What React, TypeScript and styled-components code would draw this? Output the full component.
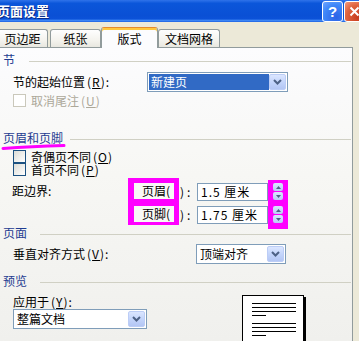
import React from "react";
import styled, { createGlobalStyle } from "styled-components";

const GlobalStyle = createGlobalStyle`
  html, body { margin: 0; padding: 0; }
  body {
    width: 359px;
    height: 341px;
    overflow: hidden;
    background: #ece9d8;
    font-family: "Noto Sans CJK SC", "Noto Sans", sans-serif;
    font-size: 12px;
    color: #000;
  }
`;

const Window = styled.div`
  width: 359px;
  height: 341px;
  overflow: hidden;
  display: flex;
  flex-direction: column;
`;

const TitleBar = styled.div`
  width: 366px;
  height: 22px;
  flex: none;
  display: flex;
  align-items: center;
  background: linear-gradient(#2f73ea 0%, #0b56da 15%, #0a50d5 70%, #0c52d8 86%, #3d86f4 93%, #1d62e2 100%);
`;

const Title = styled.div`
  flex: 1;
  margin-left: -3px;
  color: #fff;
  font-weight: bold;
  font-size: 13px;
  line-height: 14px;
  text-shadow: 1px 1px 0 #0a2a86;
`;

const CaptionButton = styled.div<{ $kind: "help" | "close" }>`
  width: 21px;
  height: 21px;
  flex: none;
  margin-right: 1px;
  box-sizing: border-box;
  border: 1px solid #fff;
  border-radius: 3px;
  display: flex;
  align-items: center;
  justify-content: center;
  color: #fff;
  font: bold 15px "Liberation Sans", sans-serif;
  background: ${(p) =>
    p.$kind === "help"
      ? "radial-gradient(circle at 70% 80%, #2b63e6 0%, #3f86f8 60%, #6ea6ff 100%)"
      : "radial-gradient(circle at 70% 80%, #c63a1c 0%, #e0643f 60%, #f39a7e 100%)"};
`;

const Body = styled.div`
  flex: 1;
  display: flex;
  flex-direction: column;
`;

const TabStrip = styled.div`
  display: flex;
  align-items: flex-end;
  height: 20px;
  margin: 5px 0 0 -3px;
  position: relative;
  z-index: 1;
`;

const Tab = styled.div<{ $w: number; $active?: boolean; $ml?: number }>`
  width: ${(p) => p.$w}px;
  height: ${(p) => (p.$active ? 21 : 18)}px;
  margin-left: ${(p) => p.$ml ?? 0}px;
  margin-bottom: ${(p) => (p.$active ? -1 : 0)}px;
  box-sizing: border-box;
  border: 1px solid #919b9c;
  border-bottom: none;
  border-top-color: ${(p) => (p.$active ? "#e68b2c" : "#919b9c")};
  border-radius: 3px 3px 0 0;
  background: ${(p) => (p.$active ? "#fcfcfe" : "linear-gradient(#fefefe, #f4f3ee 60%, #e8e7e0)")};
  box-shadow: ${(p) => (p.$active ? "inset 0 2px 0 #ffc83c" : "none")};
  display: flex;
  align-items: center;
  justify-content: center;
  padding-top: ${(p) => (p.$active ? 2 : 0)}px;
  line-height: 12px;
  white-space: nowrap;
`;

const Panel = styled.div`
  position: relative;
  flex: 1;
  width: 354px;
  margin-left: -1px;
  box-sizing: border-box;
  border: 1px solid #919b9c;
  background: linear-gradient(#fcfcfe 0%, #f7f7f4 40%, #efefec 100%);
  display: flex;
  flex-direction: column;
`;

const SectionHead = styled.div<{ $mt: number }>`
  display: flex;
  align-items: center;
  height: 12px;
  margin-top: ${(p) => p.$mt}px;
  padding-left: 3px;
  color: #1f3c91;
  line-height: 12px;
  white-space: nowrap;
`;

const Rule = styled.div<{ $gap: number }>`
  flex: 1;
  height: 1px;
  margin: 2px 1px 0 ${(p) => p.$gap}px;
  background: #d0d0c4;
`;

const Row = styled.div<{ $mt: number; $h: number }>`
  display: flex;
  align-items: center;
  height: ${(p) => p.$h}px;
  margin-top: ${(p) => p.$mt}px;
  padding-left: 13px;
`;

const FieldLabel = styled.div<{ $w: number }>`
  width: ${(p) => p.$w}px;
  flex: none;
  line-height: 12px;
  white-space: nowrap;
`;

const Mn = styled.span`
  letter-spacing: 1px;
  margin-left: 2px;
`;

const SelectBox = styled.div<{ $w: number }>`
  width: ${(p) => p.$w}px;
  height: 20px;
  flex: none;
  box-sizing: border-box;
  border: 1px solid #7f9db9;
  background: #fff;
  padding: 1px;
  display: flex;
`;

const SelectValue = styled.div<{ $selected?: boolean }>`
  flex: 1;
  display: flex;
  align-items: center;
  padding-left: 2px;
  line-height: 12px;
  background: ${(p) => (p.$selected ? "#316ac5" : "transparent")};
  color: ${(p) => (p.$selected ? "#fff" : "#000")};
`;

const DropButton = styled.div`
  width: 17px;
  flex: none;
  box-sizing: border-box;
  border: 1px solid #bccdf6;
  border-radius: 2px;
  background: linear-gradient(#dbe6ff, #c4d5fb 50%, #b3c6f4);
  display: flex;
  align-items: center;
  justify-content: center;
`;

const CheckRow = styled.div<{ $mt: number; $disabled?: boolean }>`
  display: flex;
  align-items: center;
  height: 13px;
  margin-top: ${(p) => p.$mt}px;
  padding-left: 13px;
  gap: 5px;
  line-height: 12px;
  color: ${(p) => (p.$disabled ? "#aca899" : "#000")};
`;

const Box = styled.div<{ $disabled?: boolean }>`
  width: 13px;
  height: 13px;
  flex: none;
  box-sizing: border-box;
  border: 1px solid ${(p) => (p.$disabled ? "#cac8bb" : "#1c5180")};
  background: ${(p) => (p.$disabled ? "#fff" : "linear-gradient(135deg, #dcdcd6, #fff)")};
`;

const SpinArea = styled.div`
  display: flex;
  align-items: flex-start;
  height: 47px;
  margin-top: 2px;
  padding-left: 12px;
`;

const MarginLabel = styled.div`
  width: 116px;
  flex: none;
  padding-top: 7px;
  line-height: 12px;
`;

const MarkLabels = styled.div`
  width: 51px;
  height: 47px;
  flex: none;
  box-sizing: border-box;
  padding: 5px 5px 3px 6px;
  background: #ff00ff;
  display: flex;
  flex-direction: column;
  gap: 7px;
`;

const MarkCell = styled.div`
  height: 16px;
  background: #f8f8f6;
  display: flex;
  align-items: center;
  padding-left: 8px;
  overflow: hidden;
  white-space: nowrap;
  line-height: 12px;
`;

const Inputs = styled.div`
  display: flex;
  flex-direction: column;
  gap: 5px;
  padding-top: 5px;
`;

const InputRow = styled.div`
  display: flex;
  align-items: center;
  height: 18px;
`;

const Colon = styled.div`
  width: 17px;
  flex: none;
  padding-left: 1px;
  letter-spacing: 3px;
  line-height: 12px;
`;

const TextField = styled.div`
  width: 71px;
  height: 18px;
  flex: none;
  box-sizing: border-box;
  border: 1px solid #7f9db9;
  background: #fff;
  padding-left: 3px;
  display: flex;
  align-items: center;
  letter-spacing: 1px;
  line-height: 12px;
`;

const SpinCol = styled.div`
  width: 20px;
  height: 49px;
  flex: none;
  margin-top: 2px;
  box-sizing: border-box;
  padding: 3px 5px;
  background: #ff00ff;
  display: flex;
  flex-direction: column;
  gap: 6px;
`;

const Spinner = styled.div`
  height: 17px;
  display: flex;
  flex-direction: column;
  gap: 1px;
`;

const SpinHalf = styled.div`
  flex: 1;
  border-radius: 2px;
  background: linear-gradient(#dbe6ff, #b9cbf6);
  display: flex;
  align-items: center;
  justify-content: center;
`;

const Bottom = styled.div`
  display: flex;
  align-items: flex-start;
  margin-top: 8px;
`;

const ApplyCol = styled.div`
  width: 134px;
  padding-left: 13px;
  flex: none;
  display: flex;
  flex-direction: column;
`;

const ApplyLabel = styled.div`
  height: 14px;
  line-height: 14px;
`;

const PreviewPage = styled.div`
  margin-left: 95px;
  width: 62px;
  height: 70px;
  flex: none;
  box-sizing: border-box;
  border: 1px solid #000;
  background: #fff;
  box-shadow: 2px 2px 0 #000;
`;

const Scribble = styled.svg`
  position: absolute;
  left: 1px;
  top: 95px;
`;

const Chevron = () => (
  <svg width="9" height="6" viewBox="0 0 9 6">
    <path d="M1 1 L4.5 4.5 L8 1" fill="none" stroke="#4d6185" strokeWidth="2" />
  </svg>
);

const Select = ({ w, selected, children }: { w: number; selected?: boolean; children: React.ReactNode }) => (
  <SelectBox $w={w}>
    <SelectValue $selected={selected}>{children}</SelectValue>
    <DropButton>
      <Chevron />
    </DropButton>
  </SelectBox>
);

const Spin = () => (
  <Spinner>
    <SpinHalf>
      <svg width="5" height="3" viewBox="0 0 5 3">
        <polygon points="0,3 2.5,0 5,3" fill="#4d6185" />
      </svg>
    </SpinHalf>
    <SpinHalf>
      <svg width="5" height="3" viewBox="0 0 5 3">
        <polygon points="0,0 2.5,3 5,0" fill="#4d6185" />
      </svg>
    </SpinHalf>
  </Spinner>
);

const PageLines = () => (
  <svg width="60" height="60" viewBox="0 0 60 60">
    {[7, 11, 15, 27, 31, 35].map((y) => (
      <rect key={y} x="9" y={y} width="44" height="1" fill="#000" />
    ))}
    {[19, 39].map((y) => (
      <rect key={y} x="9" y={y} width="14" height="1" fill="#000" />
    ))}
  </svg>
);

export default function App() {
  return (
    <>
      <GlobalStyle />
      <Window>
        <TitleBar>
          <Title>页面设置</Title>
          <CaptionButton $kind="help">?</CaptionButton>
          <CaptionButton $kind="close">
            <svg width="11" height="11" viewBox="0 0 11 11">
              <path d="M1.5 1.5 L9.5 9.5 M9.5 1.5 L1.5 9.5" stroke="#fff" strokeWidth="2" />
            </svg>
          </CaptionButton>
        </TitleBar>
        <Body>
          <TabStrip>
            <Tab $w={51}>页边距</Tab>
            <Tab $w={51} $ml={2}>纸张</Tab>
            <Tab $w={57} $active>版式</Tab>
            <Tab $w={62}>文档网格</Tab>
          </TabStrip>
          <Panel>
            <SectionHead $mt={6}>
              节<Rule $gap={14} />
            </SectionHead>
            <Row $mt={6} $h={20}>
              <FieldLabel $w={134}>
                节的起始位置<Mn>(<u>R</u>):</Mn>
              </FieldLabel>
              <Select w={141} selected>
                新建页
              </Select>
            </Row>
            <CheckRow $mt={2} $disabled>
              <Box $disabled />
              <span>
                取消尾注<Mn>(<u>U</u>)</Mn>
              </span>
            </CheckRow>

            <SectionHead $mt={25}>
              页眉和页脚<Rule $gap={7} />
            </SectionHead>
            <CheckRow $mt={6}>
              <Box />
              <span>
                奇偶页不同<Mn>(<u>O</u>)</Mn>
              </span>
            </CheckRow>
            <CheckRow $mt={0}>
              <Box />
              <span>
                首页不同<Mn>(<u>P</u>)</Mn>
              </span>
            </CheckRow>
            <SpinArea>
              <MarginLabel>距边界:</MarginLabel>
              <MarkLabels>
                <MarkCell>页眉(</MarkCell>
                <MarkCell>页脚(</MarkCell>
              </MarkLabels>
              <Inputs>
                <InputRow>
                  <Colon>):</Colon>
                  <TextField>1.5 厘米</TextField>
                </InputRow>
                <InputRow>
                  <Colon>):</Colon>
                  <TextField>1.75 厘米</TextField>
                </InputRow>
              </Inputs>
              <SpinCol>
                <Spin />
                <Spin />
              </SpinCol>
            </SpinArea>

            <SectionHead $mt={2}>
              页面<Rule $gap={13} />
            </SectionHead>
            <Row $mt={5} $h={20}>
              <FieldLabel $w={183}>
                垂直对齐方式<Mn>(<u>V</u>):</Mn>
              </FieldLabel>
              <Select w={90}>顶端对齐</Select>
            </Row>

            <SectionHead $mt={11}>
              预览<Rule $gap={13} />
            </SectionHead>
            <Bottom>
              <ApplyCol>
                <ApplyLabel>
                  应用于<Mn>(<u>Y</u>):</Mn>
                </ApplyLabel>
                <Select w={134}>整篇文档</Select>
              </ApplyCol>
              <PreviewPage>
                <PageLines />
              </PreviewPage>
            </Bottom>

            <Scribble width="66" height="8" viewBox="0 0 66 8">
              <path d="M2 5.5 Q 30 3.5 63 2.5" fill="none" stroke="#ff00ff" strokeWidth="3" strokeLinecap="round" />
            </Scribble>
          </Panel>
        </Body>
      </Window>
    </>
  );
}
